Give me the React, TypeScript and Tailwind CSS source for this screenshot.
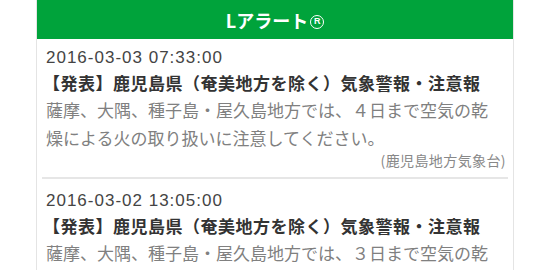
const FONT = "font-['Meiryo','Noto_Sans_CJK_JP',sans-serif]";

type Alert = { time: string; title: string; body: string; source: string };

const alerts: Alert[] = [
  {
    time: "2016-03-03 07:33:00",
    title: "【発表】鹿児島県（奄美地方を除く）気象警報・注意報",
    body: "薩摩、大隅、種子島・屋久島地方では、４日まで空気の乾燥による火の取り扱いに注意してください。",
    source: "(鹿児島地方気象台)",
  },
  {
    time: "2016-03-02 13:05:00",
    title: "【発表】鹿児島県（奄美地方を除く）気象警報・注意報",
    body: "薩摩、大隅、種子島・屋久島地方では、３日まで空気の乾燥による火の取り扱いに注意してください。種子島・屋久島地方では、",
    source: "(鹿児島地方気象台)",
  },
];

export default function App() {
  return (
    <div className={`w-[550px] h-[270px] overflow-hidden bg-white ${FONT}`}>
      <div className="ml-[36px] w-[478px] border-x border-[#e4e4e4] bg-white">
        {/* header */}
        <div className="h-[39px] bg-[#00a33b] flex items-center justify-center text-white text-[18px] font-bold leading-none">
          <span>Lアラート</span>
          {/* registered mark */}
          <span className="ml-[2px] mt-[4px] w-[14px] h-[14px] rounded-full border-[1.5px] border-white flex items-center justify-center text-[9px] font-bold font-['Liberation_Sans',sans-serif] leading-none">
            R
          </span>
        </div>

        {/* list */}
        <div className="px-[5px]">
          {alerts.map((a, i) => (
            <div key={i} className="border-b-2 border-[#e6e6e6] pt-[10px] first:pt-[7px] pb-[9px] px-[4px]">
              <div className="font-['Liberation_Sans',sans-serif] text-[17px] leading-[24px] tracking-[1px] text-[#444]">{a.time}</div>
              <div className="text-[17px] leading-[26px] font-bold text-[#333] -ml-[3px] tracking-[0.5px]">{a.title}</div>
              <div className="w-[455px] text-[17px] leading-[28px] text-[#808080]">{a.body}</div>
              <div className="text-right text-[14px] leading-[16px] tracking-[0.4px] text-[#888] -mr-[2px]">{a.source}</div>
            </div>
          ))}
        </div>
      </div>
    </div>
  );
}
